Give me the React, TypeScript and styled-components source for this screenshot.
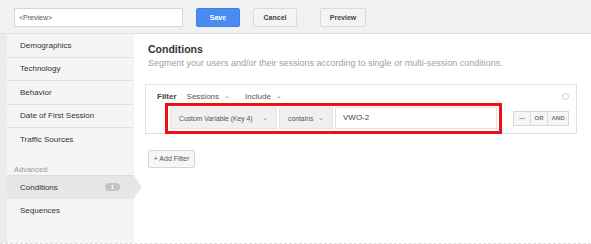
import React from "react";
import styled, { createGlobalStyle, css } from "styled-components";

const GlobalStyle = createGlobalStyle`
  html, body { margin: 0; padding: 0; background: #ffffff; }
  body { font-family: "Liberation Sans", Arial, sans-serif; color: #333; }
  * { box-sizing: border-box; }
`;

const Page = styled.div`
  width: 591px;
  height: 244px;
  display: flex;
  flex-direction: column;
  overflow: hidden;
  border-bottom: 1px dashed #dedede;
`;

const TopBar = styled.div`
  height: 34px;
  flex: none;
  display: flex;
  align-items: flex-start;
  padding: 8px 0 0 14px;
  background: #f1f1f1;
  border-bottom: 1px solid #e2e2e2;
`;

const NameInput = styled.div`
  width: 169px;
  height: 19px;
  background: #fff;
  border: 1px solid #d4d4d4;
  font-size: 7px;
  line-height: 17px;
  padding-left: 4px;
  color: #555;
`;

const Button = styled.div<{ $primary?: boolean; $width: number; $gap: number }>`
  width: ${(p) => p.$width}px;
  height: 19px;
  margin-left: ${(p) => p.$gap}px;
  border-radius: 2px;
  font-size: 7px;
  font-weight: bold;
  line-height: 17px;
  text-align: center;
  ${(p) =>
    p.$primary
      ? css`
          background: #4a8bf0;
          border: 1px solid #3f7fe6;
          color: #fff;
        `
      : css`
          background: #f4f4f4;
          border: 1px solid #dadada;
          color: #444;
        `}
`;

const Body = styled.div`
  flex: 1;
  display: flex;
  min-height: 0;
`;

const Gutter = styled.div`
  width: 7px;
  flex: none;
  background: #ebebeb;
`;

const Sidebar = styled.nav`
  width: 127px;
  flex: none;
  background: #f5f5f5;
  display: flex;
  flex-direction: column;
`;

const NavItem = styled.div<{ $active?: boolean; $topLine?: boolean; $noLine?: boolean }>`
  position: relative;
  height: 23.5px;
  flex: none;
  display: flex;
  align-items: center;
  padding-left: 13px;
  padding-right: 14px;
  font-size: 8px;
  color: #333;
  border-bottom: ${(p) => (p.$noLine ? "none" : "1px solid #e1e1e1")};
  ${(p) =>
    p.$topLine &&
    css`
      border-top: 1px solid #dcdcdc;
    `}
  ${(p) =>
    p.$active &&
    css`
      background: #e6e6e6;
      &::after {
        content: "";
        position: absolute;
        right: -8px;
        top: 0;
        width: 0;
        height: 0;
        border-left: 8px solid #e6e6e6;
        border-top: 11px solid transparent;
        border-bottom: 11px solid transparent;
      }
    `}
`;

const SectionLabel = styled.div`
  height: 23.5px;
  flex: none;
  padding: 13px 0 0 7px;
  font-size: 7.5px;
  line-height: 10px;
  color: #999;
`;

const Badge = styled.span`
  margin-left: auto;
  width: 15px;
  height: 8px;
  border-radius: 4px;
  background: #c4c4c4;
  color: #fff;
  font-size: 6px;
  font-weight: bold;
  line-height: 8px;
  text-align: center;
`;

const Main = styled.main`
  flex: 1;
  padding: 9px 0 0 14px;
  background: #fff;
`;

const Title = styled.h2`
  margin: 0;
  font-size: 10.5px;
  line-height: 12px;
  font-weight: bold;
  color: #333;
`;

const Subtitle = styled.p`
  margin: 3px 0 0;
  font-size: 9px;
  line-height: 10px;
  color: #a0a0a0;
`;

const FilterBox = styled.section`
  margin: 16px 0 0 -3px;
  width: 432px;
  height: 50px;
  border: 1px solid #e0e0e0;
  padding: 6px 0 0 11px;
`;

const FilterHeader = styled.div`
  display: flex;
  align-items: center;
  height: 10px;
  font-size: 8px;
`;

const FilterLabel = styled.span`
  font-weight: bold;
  color: #444;
`;

const Select = styled.span<{ $gap: number }>`
  margin-left: ${(p) => p.$gap}px;
  color: #555;
  display: inline-flex;
  align-items: center;
  gap: 5px;
`;

const Caret = styled.span`
  font-size: 7px;
  color: #888;
`;

const RemoveDot = styled.span`
  margin-left: auto;
  margin-right: 7px;
  width: 7px;
  height: 7px;
  border-radius: 50%;
  border: 1px solid #cfcfcf;
`;

const ConditionRow = styled.div`
  position: relative;
  display: flex;
  align-items: center;
  margin: 6px 0 0 13px;
  height: 22px;
`;

const Dropdown = styled.div<{ $width: number }>`
  width: ${(p) => p.$width}px;
  height: 22px;
  margin-right: 2px;
  background: #f0f0f0;
  border: 1px solid #e4e4e4;
  display: flex;
  align-items: center;
  justify-content: space-between;
  padding: 0 8px 0 8px;
  font-size: 6.8px;
  color: #555;
`;

const ValueInput = styled.div`
  width: 162px;
  height: 22px;
  background: #fff;
  border: 1px solid #e2e2e2;
  padding-left: 7px;
  font-size: 8px;
  line-height: 20px;
  color: #444;
`;

const Highlight = styled.div`
  position: absolute;
  left: -5px;
  top: -4px;
  width: 337px;
  height: 31px;
  border: 3px solid #ee1111;
  pointer-events: none;
`;

const LogicGroup = styled.div`
  margin-left: auto;
  margin-right: 7px;
  display: flex;
  height: 15px;
  border: 1px solid #d6d6d6;
  background: #f6f6f6;
`;

const LogicButton = styled.span<{ $width: number }>`
  width: ${(p) => p.$width}px;
  text-align: center;
  font-size: 6px;
  font-weight: bold;
  line-height: 13px;
  color: #777;
  & + & {
    border-left: 1px solid #dedede;
  }
`;

const AddFilter = styled.div`
  margin-top: 16px;
  width: 47px;
  height: 18px;
  background: #f6f6f6;
  border: 1px solid #d6d6d6;
  border-radius: 2px;
  font-size: 7px;
  line-height: 16px;
  text-align: center;
  color: #555;
`;

const navItems = ["Demographics", "Technology", "Behavior", "Date of First Session"];

export default function App() {
  return (
    <>
      <GlobalStyle />
      <Page>
        <TopBar>
          <NameInput>&lt;Preview&gt;</NameInput>
          <Button $primary $width={44} $gap={13}>Save</Button>
          <Button $width={44} $gap={13}>Cancel</Button>
          <Button $width={46} $gap={23}>Preview</Button>
        </TopBar>
        <Body>
          <Gutter />
          <Sidebar>
            {navItems.map((n) => (
              <NavItem key={n}>{n}</NavItem>
            ))}
            <NavItem $noLine>Traffic Sources</NavItem>
            <SectionLabel>Advanced</SectionLabel>
            <NavItem $active $topLine $noLine>
              Conditions
              <Badge>1</Badge>
            </NavItem>
            <NavItem $noLine>Sequences</NavItem>
          </Sidebar>
          <Main>
            <Title>Conditions</Title>
            <Subtitle>
              Segment your users and/or their sessions according to single or multi-session conditions.
            </Subtitle>
            <FilterBox>
              <FilterHeader>
                <FilterLabel>Filter</FilterLabel>
                <Select $gap={10}>
                  Sessions <Caret>⌄</Caret>
                </Select>
                <Select $gap={15}>
                  Include <Caret>⌄</Caret>
                </Select>
                <RemoveDot />
              </FilterHeader>
              <ConditionRow>
                <Dropdown $width={107}>
                  Custom Variable (Key 4) <Caret>⌄</Caret>
                </Dropdown>
                <Dropdown $width={54}>
                  contains <Caret>⌄</Caret>
                </Dropdown>
                <ValueInput>VWO-2</ValueInput>
                <Highlight />
                <LogicGroup>
                  <LogicButton $width={16}>—</LogicButton>
                  <LogicButton $width={17}>OR</LogicButton>
                  <LogicButton $width={21}>AND</LogicButton>
                </LogicGroup>
              </ConditionRow>
            </FilterBox>
            <AddFilter>+ Add Filter</AddFilter>
          </Main>
        </Body>
      </Page>
    </>
  );
}
